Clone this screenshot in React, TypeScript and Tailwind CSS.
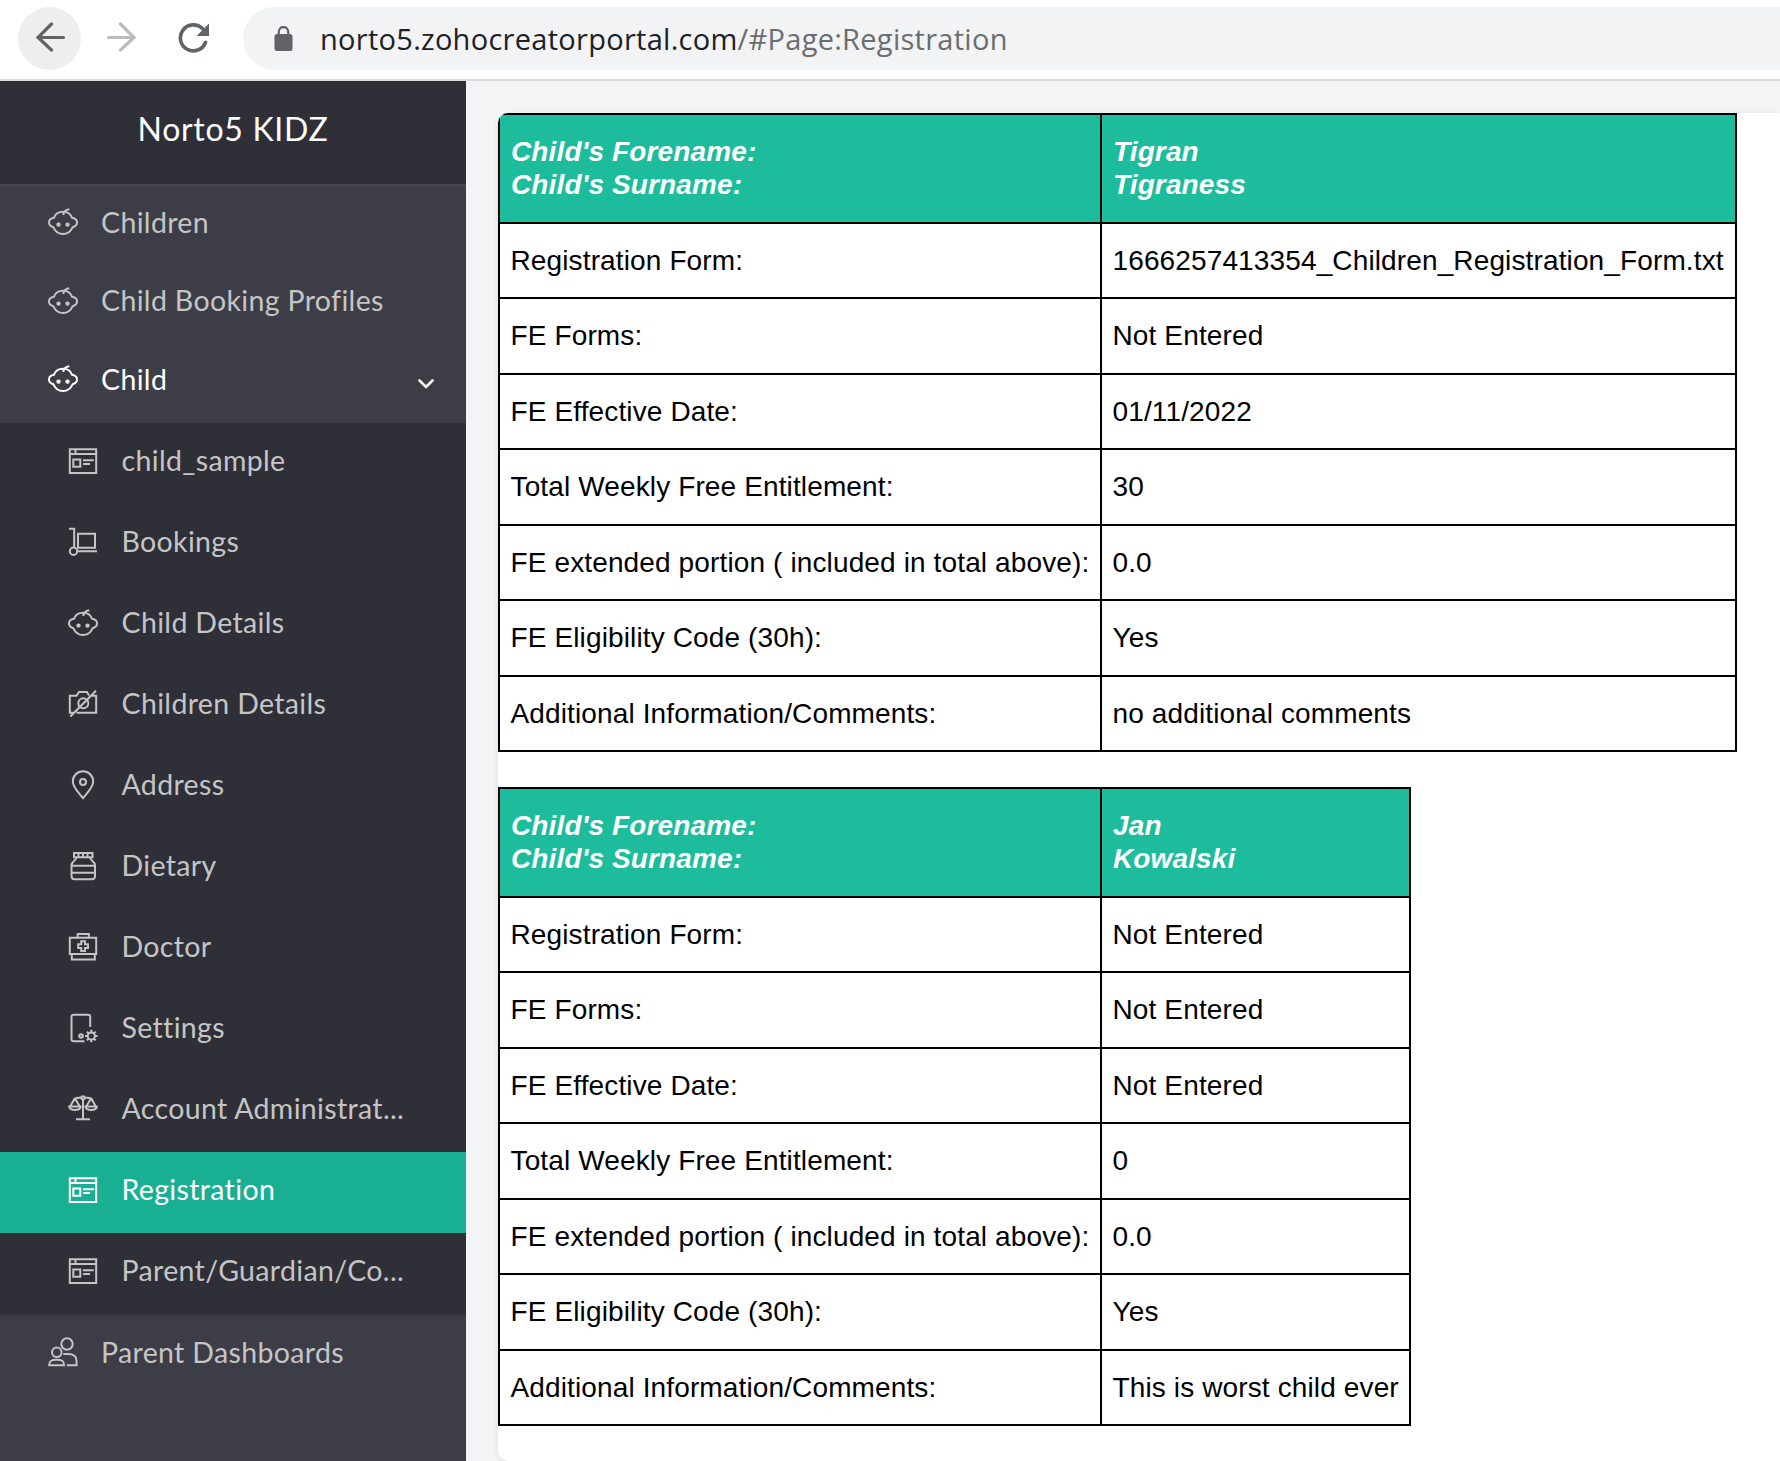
import React from "react";

type IconName = "baby" | "page" | "trolley" | "camera" | "pin" | "jar" | "kit" | "device" | "scales" | "people";

const shapes: Record<IconName, React.ReactNode> = {
  baby: (
    <>
      <path d="M15 4.8C10.5 4.8 7.2 7.2 5.9 10.8C2.6 11.3 1 13.4 1 15.6C1 17.9 2.7 19.6 5.3 20.2C7.2 24.4 10.8 27.1 15 27.1S22.8 24.4 24.7 20.2C27.3 19.6 29 17.9 29 15.6C29 13.4 27.4 11.3 24.1 10.8C22.8 7.2 19.5 4.8 15 4.8Z" />
      <path d="M15.3 8C15.5 5 18 2.8 21.3 2.3" />
      <circle cx="10.5" cy="17.6" r="1.2" fill="currentColor" />
      <circle cx="19.5" cy="17.6" r="1.2" fill="currentColor" />
    </>
  ),
  page: (
    <path d="M1.8 3.3H28.2V27H1.8ZM1.8 8H28.2M7.5 3.5V8M5.3 13.5H12.3V20.7H5.3ZM15 14.2H25.8M15 18H22" />
  ),
  trolley: (
    <>
      <path d="M1 1.8H6.2V21M10 6.8H27V20.7H10ZM9.8 24.3H29" />
      <circle cx="5.5" cy="24.3" r="3.7" />
    </>
  ),
  camera: (
    <>
      <path d="M5 23.8H1.8V6.8H8.5L11 3H19L21 6.5M24 6.8H28.2V23.8H8.5M2.3 27.5L28 1.8" />
      <circle cx="15.3" cy="14.3" r="5" />
    </>
  ),
  pin: (
    <>
      <path d="M15 28.2C11 23 4.8 17.5 4.8 11.5A10.2 10.2 0 0 1 25.2 11.5C25.2 17.5 19 23 15 28.2Z" />
      <circle cx="15" cy="12" r="3" />
    </>
  ),
  jar: (
    <path d="M6 2H24.5V6.3H6ZM10.5 2V6M15 2V6M19.5 2V6M8.5 6.3C8.5 10 3.5 9.5 3.5 14.5V25C3.5 27 4.5 28.2 6.5 28.2H24C26 28.2 27 27 27 25V14.5C27 9.5 22 10 22 6.3M3.5 14.7H27M3.5 21.8H27" />
  ),
  kit: (
    <path d="M1.8 5.7H28.2V22H1.8ZM9.7 5.5V2H20.8V5.5M3.8 22V27.4H26.8V22M13.2 9.2H17V12.2H20V15.9H17V18.9H13.2V15.9H10.2V12.2H13.2Z" />
  ),
  device: (
    <>
      <path d="M22.2 14V4C22.2 2.5 21.5 1.8 20 1.8H5.6C4.2 1.8 3.5 2.5 3.5 4V26C3.5 27.5 4.2 28.2 5.6 28.2H16.5" />
      <circle cx="13" cy="23" r="1.8" />
      <circle cx="23.3" cy="23" r="3.6" />
      <path d="M23.3 16.8V19.2M23.3 26.8V29.2M17.1 23H19.5M27.1 23H29.5M18.9 18.6L20.7 20.4M25.9 25.6L27.7 27.4M18.9 27.4L20.7 25.6M25.9 20.4L27.7 18.6" />
    </>
  ),
  scales: (
    <>
      <path d="M15 5V25M8 25.2H22M6.8 4.2C9 4 10 3.5 13.3 3.5M23.2 4.2C21 4 20 3.5 16.7 3.5M6.8 4.3L2.2 12.6M6.8 4.3L11.8 12.6M23.2 4.3L18.2 12.6M23.2 4.3L27.8 12.6M1.2 12.6H12.6C12.6 17.2 1.2 17.2 1.2 12.6ZM17.4 12.6H28.8C28.8 17.2 17.4 17.2 17.4 12.6Z" />
      <circle cx="15" cy="3.8" r="1.6" />
    </>
  ),
  people: (
    <>
      <circle cx="19" cy="7" r="5.7" />
      <circle cx="8.8" cy="15.3" r="4.8" />
      <path d="M1.2 28.2C1.2 23.5 3.8 22.8 8.8 22.8S16 23.5 16 28.2ZM15.3 17H20C25.5 17 28.5 18.5 28.5 23.5V28.2H18.8" />
    </>
  ),
};

function Icon({ name }: { name: IconName }) {
  return (
    <svg viewBox="0 0 30 30" className="size-[30px] shrink-0" fill="none" stroke="currentColor" strokeWidth="2">
      {shapes[name]}
    </svg>
  );
}

const subItems: { icon: IconName; label: string }[] = [
  { icon: "page", label: "child_sample" },
  { icon: "trolley", label: "Bookings" },
  { icon: "baby", label: "Child Details" },
  { icon: "camera", label: "Children Details" },
  { icon: "pin", label: "Address" },
  { icon: "jar", label: "Dietary" },
  { icon: "kit", label: "Doctor" },
  { icon: "device", label: "Settings" },
  { icon: "scales", label: "Account Administrat..." },
  { icon: "page", label: "Registration" },
  { icon: "page", label: "Parent/Guardian/Co..." },
];

function TopItem({ icon, label, open = false }: { icon: IconName; label: string; open?: boolean }) {
  return (
    <div className={`flex h-[78.5px] items-center pb-[6px] pl-[47.5px] ${open ? "text-white" : "text-[#c5c5c5]"}`}>
      <Icon name={icon} />
      <span className="ml-[23.5px] whitespace-nowrap">{label}</span>
      {open && (
        <svg viewBox="0 0 16 10" className="mt-[9px] mr-8 ml-auto h-2.5 w-4" fill="none" stroke="currentColor" strokeWidth="2.6" strokeLinecap="round">
          <path d="M1.5 1.5L8 8L14.5 1.5" />
        </svg>
      )}
    </div>
  );
}

function Sidebar() {
  return (
    <aside className="flex w-[466px] shrink-0 flex-col bg-[#3d3d47] font-[Lato] text-[28.5px] tracking-[0.35px]">
      <div className="flex h-[105px] items-center justify-center border-b-2 border-[#45454f] bg-[#2f2f38] pb-[7px] text-[32px] tracking-[0.7px] text-white">
        Norto5 KIDZ
      </div>
      <nav className="flex flex-col">
        <div className="h-[237px]">
          <TopItem icon="baby" label="Children" />
          <TopItem icon="baby" label="Child Booking Profiles" />
          <TopItem icon="baby" label="Child" open />
        </div>
        <div className="bg-[#2f2f38]">
          {subItems.map(({ icon, label }) => (
            <div
              key={label}
              className={`flex h-[81px] items-center pb-[6px] pl-[68px] ${
                label === "Registration" ? "bg-[#18af92] text-white" : "text-[#c5c5c5]"
              }`}
            >
              <Icon name={icon} />
              <span className="ml-[23.5px] whitespace-nowrap">{label}</span>
            </div>
          ))}
        </div>
        <div className="border-t-2 border-[#373741]">
          <TopItem icon="people" label="Parent Dashboards" />
        </div>
      </nav>
    </aside>
  );
}

const labels = [
  "Registration Form:",
  "FE Forms:",
  "FE Effective Date:",
  "Total Weekly Free Entitlement:",
  "FE extended portion ( included in total above):",
  "FE Eligibility Code (30h):",
  "Additional Information/Comments:",
];

function ChildTable({ name, values, width }: { name: [string, string]; values: string[]; width: string }) {
  return (
    <div className={`grid grid-cols-[602px_1fr] grid-rows-[109px_75px_76px_75px_76px_75px_76px_75px] border-t-2 border-l-2 border-black ${width}`}>
      {[["Child's Forename:", "Child's Surname:"], name].map(([first, second]) => (
        <div key={first} className="flex flex-col justify-center border-r-2 border-b-2 border-black bg-[#1cbc9c] pb-px pl-[11px] text-[28px] leading-[33px] font-bold text-white italic">
          <span>{first}</span>
          <span>{second}</span>
        </div>
      ))}
      {labels.map((label, i) => (
        <React.Fragment key={label}>
          {[label, values[i]].map((text, col) => (
            <div key={col} className="flex items-center border-r-2 border-b-2 border-black pl-[10.5px] whitespace-nowrap">
              {text}
            </div>
          ))}
        </React.Fragment>
      ))}
    </div>
  );
}

function BrowserBar() {
  return (
    <header className="flex h-[81px] items-start border-b-2 border-[#dcdddf] bg-white pt-[7px] pl-[18px]">
      <div className="flex size-[63px] items-center justify-center rounded-full bg-[#eeeeee] text-[#5f6368]">
        <svg viewBox="0 0 30 30" className="mb-1 ml-0.5 size-[30px]" fill="none" stroke="currentColor" strokeWidth="3.2" strokeLinecap="round">
          <path d="M27.5 15.5H2M15.5 2L2 15.5L15.5 28" />
        </svg>
      </div>
      <svg viewBox="0 0 30 30" className="mt-[15px] ml-[25px] size-[30px] text-[#bbbcbe]" fill="none" stroke="currentColor" strokeWidth="3.2" strokeLinecap="round">
        <path d="M2.5 15.5H28M14.5 2L28 15.5L14.5 28" />
      </svg>
      <svg viewBox="0 0 32 32" className="mt-[15px] ml-[42px] size-8 text-[#5f6368]" fill="none" stroke="currentColor" strokeWidth="3.6">
        <path d="M27.5 20.5A13 13 0 1 1 24.5 6.6" strokeLinecap="round" />
        <path d="M31 1.5V14H18.5Z" fill="currentColor" stroke="none" />
      </svg>
      <div className="ml-[33px] flex h-[63px] flex-1 items-center rounded-l-full bg-[#f1f3f4] pl-[31px]">
        <svg viewBox="0 0 20 25" className="h-[25px] w-[19px] text-[#5f6368]" fill="none" preserveAspectRatio="none">
          <rect x="0.5" y="8" width="19" height="17" rx="2.5" fill="currentColor" />
          <path d="M5 9V6A5 5 0 0 1 15 6V9" stroke="currentColor" strokeWidth="2.3" />
        </svg>
        <span className="ml-[27px] font-['Open_Sans'] text-[29px] tracking-[0.28px] whitespace-nowrap text-[#202124]">
          norto5.zohocreatorportal.com<span className="text-[#6b6d70]">/#Page:Registration</span>
        </span>
      </div>
    </header>
  );
}

export default function App() {
  return (
    <div className="flex h-[1461px] w-[1780px] flex-col overflow-hidden bg-[#f3f4f6]">
      <BrowserBar />
      <div className="flex min-h-0 flex-1">
        <Sidebar />
        <main className="flex-1 pt-8 pl-8">
          <div className="flex h-[1348px] flex-col gap-[35px] overflow-hidden rounded-l-[10px] bg-white font-['Liberation_Sans'] text-[28px] tracking-[0.13px] text-black shadow-[0_2px_6px_rgba(0,0,0,0.1)]">
            <ChildTable
              name={["Tigran", "Tigraness"]}
              values={["1666257413354_Children_Registration_Form.txt", "Not Entered", "01/11/2022", "30", "0.0", "Yes", "no additional comments"]}
              width="w-[1239px]"
            />
            <ChildTable
              name={["Jan", "Kowalski"]}
              values={["Not Entered", "Not Entered", "Not Entered", "0", "0.0", "Yes", "This is worst child ever"]}
              width="w-[913px]"
            />
          </div>
        </main>
      </div>
    </div>
  );
}
